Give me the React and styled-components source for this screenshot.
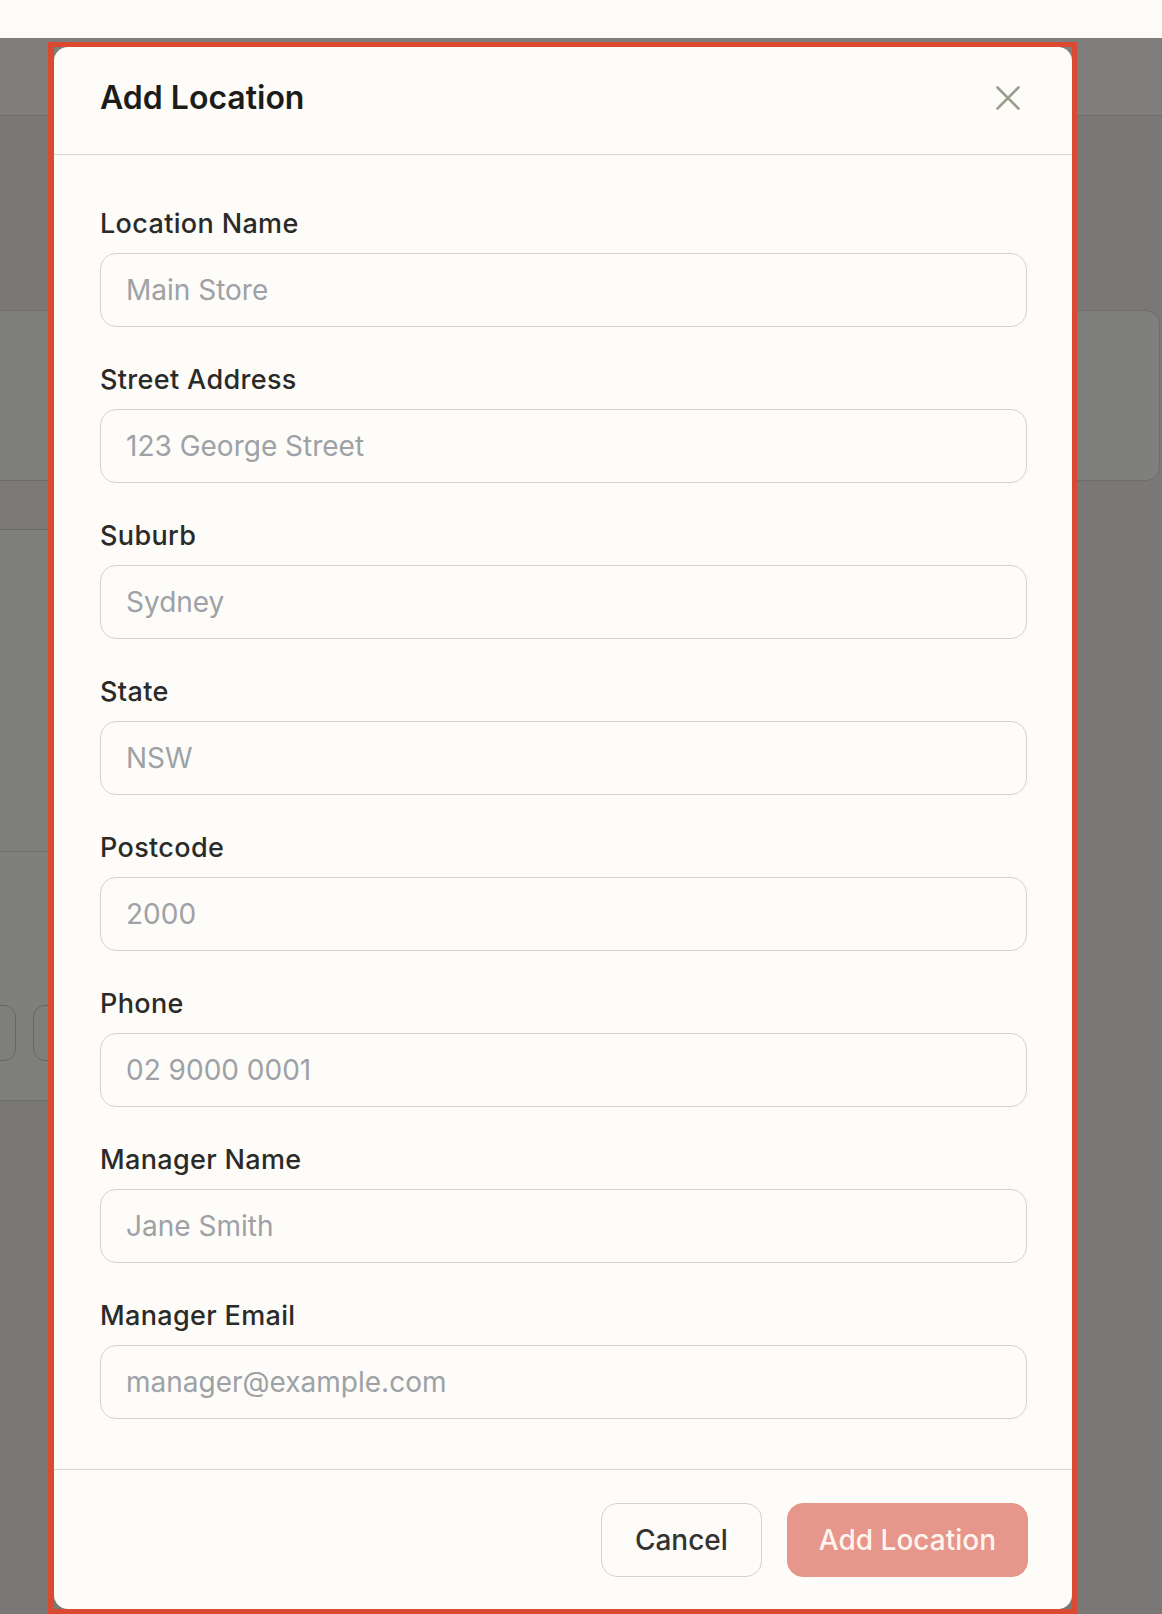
import React from 'react'
import styled, { createGlobalStyle } from 'styled-components'

const fields = [
  { label: 'Location Name', placeholder: 'Main Store' },
  { label: 'Street Address', placeholder: '123 George Street' },
  { label: 'Suburb', placeholder: 'Sydney' },
  { label: 'State', placeholder: 'NSW' },
  { label: 'Postcode', placeholder: '2000' },
  { label: 'Phone', placeholder: '02 9000 0001' },
  { label: 'Manager Name', placeholder: 'Jane Smith' },
  { label: 'Manager Email', placeholder: 'manager@example.com' }
]

export default function App() {
  return (
    <>
      <GlobalStyle />
      <Page>
        <TopStrip />
        <Stage>
          <PageHead />
          <Content>
            <StatsCard />
            <TableCard>
              <TableHead />
              <TableBody />
              <TableFoot>
                <PageButton />
                <PageButton />
              </TableFoot>
            </TableCard>
          </Content>

          <Overlay>
            <Frame>
              <Modal>
                <Header>
                  <Title>Add Location</Title>
                  <CloseButton aria-label="Close">
                    <svg width="24" height="24" viewBox="0 0 24 24" fill="none">
                      <path d="M1.5 1.5L22.5 22.5M22.5 1.5L1.5 22.5" stroke="currentColor" strokeWidth="2.6" strokeLinecap="round" />
                    </svg>
                  </CloseButton>
                </Header>

                <Body>
                  {fields.map(f => (
                    <Field key={f.label}>
                      <Label>{f.label}</Label>
                      <Input type="text" placeholder={f.placeholder} />
                    </Field>
                  ))}
                </Body>

                <Footer>
                  <Button>Cancel</Button>
                  <Button primary>Add Location</Button>
                </Footer>
              </Modal>
            </Frame>
          </Overlay>
        </Stage>
      </Page>
    </>
  )
}

const GlobalStyle = createGlobalStyle`
  html, body {
    margin: 0;
    padding: 0;
  }
  body {
    background: #fcfbf7;
    font-family: Inter, "Noto Sans", "Liberation Sans", sans-serif;
  }
  * {
    box-sizing: border-box;
  }
`

const Page = styled.div`
  width: 1162px;
  height: 1614px;
  overflow: hidden;
  display: flex;
  flex-direction: column;
`

const TopStrip = styled.div`
  height: 38px;
  flex-shrink: 0;
  background: #fcfbf7;
`

const Stage = styled.div`
  position: relative;
  flex: 1;
  background: #f4f0ec;
  overflow: hidden;
`

const PageHead = styled.div`
  height: 78px;
  background: #fefcf8;
  border-bottom: 1px solid #dcd8d4;
`

const Content = styled.div`
  padding-top: 194px;
  margin-left: -20px;
  margin-right: 2px;
`

const StatsCard = styled.div`
  height: 171px;
  background: #fffefa;
  border: 1px solid #dcd8d4;
  border-radius: 14px;
`

const TableCard = styled.div`
  width: 720px;
  background: #fffefa;
  border-bottom: 1px solid #dcd8d4;
`

const TableHead = styled.div`
  height: 49px;
  background: #f6f3ee;
  border-bottom: 1px solid #dcd8d4;
`

const TableBody = styled.div`
  height: 322px;
  border-bottom: 1px solid #dcd8d4;
`

const TableFoot = styled.div`
  height: 248px;
  display: flex;
  align-items: flex-start;
  gap: 17px;
  padding-top: 153px;
`

const PageButton = styled.div`
  width: 36px;
  height: 56px;
  border: 1px solid #cfcbc6;
  border-radius: 12px;
`

const Overlay = styled.div`
  position: absolute;
  inset: 0;
  background: rgba(0, 0, 0, 0.5);
  padding: 4px 0 0 48px;
`

const Frame = styled.div`
  width: 1029px;
  height: 1572px;
  border: 5px solid #d94a31;
  border-left-width: 6px;
`

const Modal = styled.div`
  height: 100%;
  display: flex;
  flex-direction: column;
  background: #fdfcf8;
  border-radius: 14px;
  overflow: hidden;
`

const Header = styled.div`
  display: flex;
  align-items: center;
  justify-content: space-between;
  padding: 31px 52px 36px 46px;
  border-bottom: 1px solid #d9d7cf;
`

const Title = styled.h2`
  margin: 0;
  font-size: 32px;
  line-height: 40px;
  font-weight: 600;
  color: #1c1c1a;
`

const CloseButton = styled.button`
  display: flex;
  align-items: center;
  justify-content: center;
  width: 24px;
  height: 24px;
  padding: 0;
  border: 0;
  background: none;
  color: #9b9d8e;
  cursor: pointer;
`

const Body = styled.div`
  display: flex;
  flex-direction: column;
  gap: 35px;
  padding: 51px 45px 50px 46px;
  border-bottom: 1px solid #d9d7cf;
`

const Field = styled.div`
  display: flex;
  flex-direction: column;
  gap: 11px;
`

const Label = styled.label`
  font-size: 27px;
  line-height: 36px;
  font-weight: 500;
  letter-spacing: 0.35px;
  color: #2a2a28;
`

const Input = styled.input`
  height: 74px;
  width: 100%;
  padding: 0 25px;
  border: 1.5px solid #d6d3c9;
  border-radius: 16px;
  background: #fdfcf8;
  font-family: inherit;
  font-size: 28px;
  color: #2a2a28;
  outline: none;

  &::placeholder {
    color: #9ea1a6;
  }
`

const Footer = styled.div`
  flex: 1;
  display: flex;
  justify-content: flex-end;
  align-items: flex-start;
  gap: 25px;
  padding: 33px 44px 0 0;
`

const Button = styled.button`
  height: 74px;
  padding: 0 ${p => (p.primary ? '31px' : '33px')};
  border-radius: 16px;
  border: 1.5px solid ${p => (p.primary ? '#e6968a' : '#d6d3c9')};
  background: ${p => (p.primary ? '#e6968a' : '#fdfcf8')};
  color: ${p => (p.primary ? '#fef5ef' : '#333331')};
  font-family: inherit;
  font-size: 28px;
  font-weight: 500;
  cursor: pointer;
`
